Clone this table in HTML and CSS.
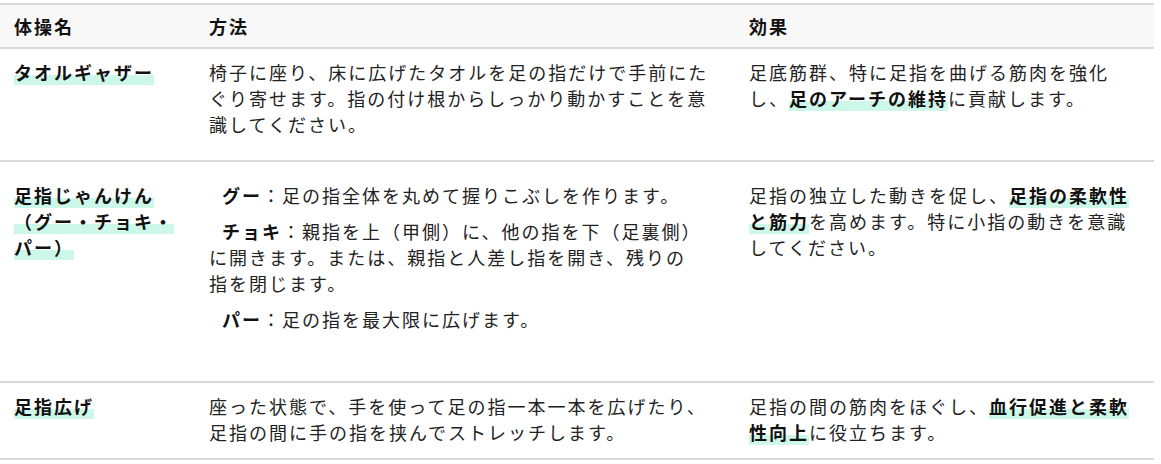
FILE: index.html
```html
<!DOCTYPE html>
<html lang="ja">
<head>
<meta charset="utf-8">
<link rel="stylesheet" href="styles.css">
</head>
<body>
<div class="wrap">
<table class="tbl">
  <colgroup>
    <col class="c1"><col class="c2"><col class="c3">
  </colgroup>
  <thead>
    <tr><th>体操名</th><th>方法</th><th>効果</th></tr>
  </thead>
  <tbody>
    <tr class="r1">
      <td><strong class="hl">タオルギャザー</strong></td>
      <td class="method">椅子に座り、床に広げたタオルを足の指だけで手前にたぐり寄せます。指の付け根からしっかり動かすことを意識してください。</td>
      <td>足底筋群、特に足指を曲げる筋肉を強化し、<strong class="hl">足のアーチの維持</strong>に貢献します。</td>
    </tr>
    <tr class="r2">
      <td><strong class="hl">足指じゃんけん（グー・チョキ・パー）</strong></td>
      <td class="method">
        <p class="step"><strong>グー</strong>：足の指全体を丸めて握りこぶしを作ります。</p>
        <p class="step"><strong>チョキ</strong>：親指を上（甲側）に、他の指を下（足裏側）に開きます。または、親指と人差し指を開き、残りの<span class="nw">指を</span>閉じます。</p>
        <p class="step"><strong>パー</strong>：足の指を最大限に広げます。</p>
      </td>
      <td>足指の独立した動きを促し、<strong class="hl">足指の柔軟性と筋力</strong>を高めます。特に小指の動きを意識してください。</td>
    </tr>
    <tr class="r3">
      <td><strong class="hl">足指広げ</strong></td>
      <td class="method">座った状態で、手を使って足の指一本一本を広げたり、足指の間に手の指を挟んでストレッチします。</td>
      <td>足指の間の筋肉をほぐし、<strong class="hl">血行促進と柔軟性向上</strong>に役立ちます。</td>
    </tr>
  </tbody>
</table>
</div>
</body>
</html>
```

FILE: styles.css
```css
html, body {
  margin: 0;
  padding: 0;
  background: #ffffff;
}
.wrap {
  padding: 3px 7px 0 0;
}
.tbl {
  width: 1154px;
  border-collapse: collapse;
  table-layout: fixed;
  font-family: "Noto Sans CJK JP", "Noto Sans", sans-serif;
  font-size: 18px;
  line-height: 26px;
  letter-spacing: 2px;
  color: #222222;
}
.c1 { width: 195px; }
.c2 { width: 540px; }
.c3 { width: 419px; }
.tbl th {
  background: #f8f8f8;
  text-align: left;
  font-weight: 700;
  color: #111111;
  padding: 8px 14px 8px;
  border-top: 2px solid #d9d9d9;
  border-bottom: 2px solid #d9d9d9;
}
.tbl td {
  padding: 10px 14px 13px;
  vertical-align: baseline;
  border-bottom: 2px solid #d9d9d9;
}
.tbl td.method {
  padding-right: 18px;
}
.r1 td { padding-bottom: 23px; }
.r2 td { padding-bottom: 39px; }
.tbl strong {
  font-weight: 700;
  color: #111111;
}
.hl {
  background: linear-gradient(transparent 62%, #cdf7e9 62%);
}
.step {
  margin: 10px 0;
  text-indent: 13px;
}
.nw {
  white-space: nowrap;
}
```
